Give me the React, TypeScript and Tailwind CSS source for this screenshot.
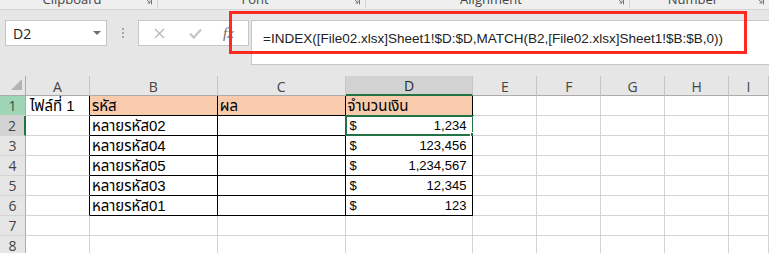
import React from "react";

const CELL_FONT = { fontFamily: '"Liberation Sans", "Noto Sans Thai", "Tahoma", "DejaVu Sans", sans-serif' };
const UI_FONT = { fontFamily: '"Open Sans", "Noto Sans", sans-serif' };

function Launcher() {
  return (
    <svg width="8" height="8" viewBox="0 0 8 8" className="shrink-0">
      <path d="M0.5 0.5 H7.5 V7.5" fill="none" stroke="#7a7a7a" strokeWidth="1" />
      <path d="M2 2 L6 6 M6 3.5 V6 H3.5" fill="none" stroke="#7a7a7a" strokeWidth="1" />
    </svg>
  );
}

function RibbonGroup({ label, width, last }: { label: string; width: string; last?: boolean }) {
  return (
    <div className={`flex items-start h-[9px] overflow-hidden ${width} ${last ? "" : "border-r border-[#d5d5d5]"}`}>
      <span className="flex-1 text-center text-[13px] leading-[13px] -mt-[7px] text-[#444]" style={UI_FONT}>
        {label}
      </span>
      <div className="-mt-[3px] mr-[5px]">
        <Launcher />
      </div>
    </div>
  );
}

type Row = { a?: string; b?: string; c?: string; d?: number | null; head?: boolean };

const rows: Row[] = [
  { a: "ไฟล์ที่ 1", b: "รหัส", c: "ผล", head: true },
  { b: "หลายรหัส02", d: 1234 },
  { b: "หลายรหัส04", d: 123456 },
  { b: "หลายรหัส05", d: 1234567 },
  { b: "หลายรหัส03", d: 12345 },
  { b: "หลายรหัส01", d: 123 },
  {},
  {},
];

const colWidths = ["w-[64px]", "w-[128px]", "w-[128px]", "w-[128px]", "w-[64px]", "w-[64px]", "w-[64px]", "w-[64px]", "w-[40px]"];
const colLetters = ["A", "B", "C", "D", "E", "F", "G", "H", "I"];

export default function App() {
  return (
    <div className="relative w-[769px] h-[253px] overflow-hidden bg-[#e6e6e6]">
      {/* Ribbon group labels */}
      <div className="flex h-[10px] bg-[#efefef] border-b border-[#d5d5d5]">
        <RibbonGroup label="Clipboard" width="w-[158px]" />
        <RibbonGroup label="Font" width="w-[208px]" />
        <RibbonGroup label="Alignment" width="w-[264px]" />
        <RibbonGroup label="Number" width="w-[139px]" last />
      </div>

      {/* Formula bar */}
      <div className="flex items-start h-[66px] pt-[10px]">
        <div className="ml-[5px] w-[102px] h-[26px] bg-white border border-[#c6c6c6] flex items-center justify-between pl-[7px] pr-[5px]">
          <span className="text-[14px] text-[#222]" style={UI_FONT}>D2</span>
          <svg width="8" height="4" viewBox="0 0 8 4"><path d="M0 0 H8 L4 4 Z" fill="#6f6f6f" /></svg>
        </div>
        <div className="w-[31px] h-[26px] flex flex-col items-center justify-center gap-[2px]">
          <div className="w-[2px] h-[2px] bg-[#a8a8a8]" />
          <div className="w-[2px] h-[2px] bg-[#a8a8a8]" />
          <div className="w-[2px] h-[2px] bg-[#a8a8a8]" />
        </div>
        <div className="w-[111px] h-[26px] bg-white border border-[#c6c6c6] flex items-center">
          <div className="w-[38px] flex justify-center pl-[2px]">
            <svg width="11" height="11" viewBox="0 0 11 11">
              <path d="M1 1 L10 10 M10 1 L1 10" stroke="#b8b8b8" strokeWidth="1.3" />
            </svg>
          </div>
          <div className="w-[36px] flex justify-center">
            <svg width="13" height="11" viewBox="0 0 13 11">
              <path d="M1 5.5 L4.8 9.5 L12 1.5" fill="none" stroke="#c4c4c4" strokeWidth="2.2" />
            </svg>
          </div>
          <div className="flex-1 flex justify-start pl-[10px]">
            <span className="italic text-[15px] text-[#6a6a6a]" style={{ fontFamily: '"Liberation Serif", serif' }}>fx</span>
          </div>
        </div>
        <div className="ml-[2px] flex-1 h-[45px] bg-white border border-r-0 border-[#c6c6c6] pl-[11px] pt-[4px]">
          <span className="text-[13.5px] leading-[20px] text-[#222]" style={CELL_FONT}>
            =INDEX([File02.xlsx]Sheet1!$D:$D,MATCH(B2,[File02.xlsx]Sheet1!$B:$B,0))
          </span>
        </div>
      </div>

      {/* Sheet */}
      <div className="flex flex-col">
        {/* column header row */}
        <div className="flex h-[20px]">
          <div className="w-[26px] h-[20px] border-r border-b border-[#ababab] relative flex items-end justify-end pr-[3px] pb-[5px]">
            <svg width="11" height="11" viewBox="0 0 11 11"><path d="M11 0 V11 H0 Z" fill="#b3b3b3" /></svg>
          </div>
          {colLetters.map((l, i) => {
            const sel = l === "D";
            return (
              <div
                key={l}
                className={`${colWidths[i]} h-[20px] flex items-center justify-center text-[14px] ${
                  sel ? "bg-[#d2d2d2] border-b-2 border-b-[#217346] text-[#262626]" : "border-b border-b-[#ababab] text-[#444]"
                } border-r border-r-[#c6c6c6]`}
                style={UI_FONT}
              >
                <span className="mt-[1px]">{l}</span>
              </div>
            );
          })}
        </div>

        {rows.map((r, ri) => {
          const rowNum = ri + 1;
          const inTable = rowNum <= 6;
          const rh =
            rowNum === 1
              ? "bg-[#9fd5b7] text-[#1f5c3a] border-r border-r-[#ababab]"
              : rowNum === 2
              ? "bg-[#d2d2d2] text-[#444] border-r-2 border-r-[#217346]"
              : "text-[#444] border-r border-r-[#ababab]";
          return (
            <div key={ri} className="flex h-[20px]">
              <div
                className={`w-[26px] h-[20px] border-b border-b-[#d4d4d4] flex items-center justify-center text-[14px] ${rh}`}
                style={UI_FONT}
              >
                {rowNum}
              </div>
              {colLetters.map((l, ci) => {
                const tableCol = ci >= 1 && ci <= 3;
                const isBlackR = inTable && ci <= 3;
                const isBlackB = inTable && tableCol;
                const peach = rowNum === 1 && tableCol;
                const white = !(rowNum === 1 && tableCol);
                const thai = "text-[15px] leading-[19px]";
                let content: React.ReactNode = null;
                if (ci === 0 && r.a) content = <span className={`pl-[4px] ${thai}`}>{r.a}</span>;
                if (ci === 1 && r.b) content = <span className={`pl-[2px] ${thai}`}>{r.b}</span>;
                if (ci === 2 && r.c) content = <span className={`pl-[2px] ${thai}`}>{r.c}</span>;
                if (ci === 3 && rowNum === 1) content = <span className={`pl-[2px] ${thai}`}>จำนวนเงิน</span>;
                if (ci === 3 && r.d != null)
                  content = (
                    <div className="flex w-full justify-between pl-[4px] pr-[6px]">
                      <span>$</span>
                      <span>{r.d.toLocaleString("en-US")}</span>
                    </div>
                  );
                const selected = ci === 3 && rowNum === 2;
                return (
                  <div
                    key={l}
                    className={`${colWidths[ci]} h-[20px] relative flex items-center text-[13px] leading-[19px] text-black whitespace-nowrap ${
                      isBlackR ? "border-r border-r-black" : "border-r border-r-[#d4d4d4]"
                    } ${isBlackB ? "border-b border-b-black" : "border-b border-b-[#d4d4d4]"} ${
                      peach ? "bg-[#f8cbad]" : white ? "bg-white" : ""
                    }`}
                    style={CELL_FONT}
                  >
                    {content}
                    {selected && (
                      <div className="absolute -left-[1px] -top-[1px] -right-[2px] -bottom-[1px] border-2 border-[#217346] pointer-events-none">
                        <div className="absolute -right-[4px] -bottom-[4px] w-[6px] h-[6px] bg-[#217346] border border-white" />
                      </div>
                    )}
                  </div>
                );
              })}
            </div>
          );
        })}
      </div>

      {/* Red highlight box */}
      <div className="absolute left-[229px] top-[11px] w-[518px] h-[43px] border-[3px] border-[#ff2a1f] pointer-events-none" />
    </div>
  );
}
